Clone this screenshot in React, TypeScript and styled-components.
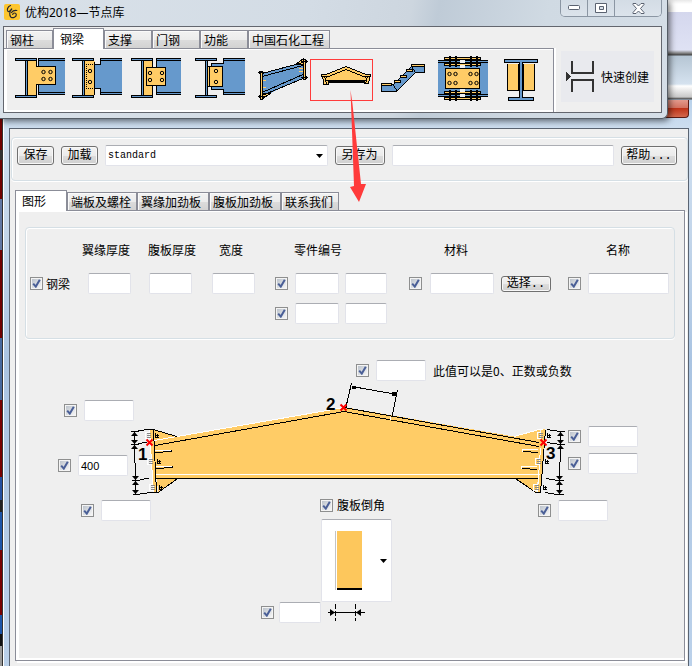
import React from 'react';
import styled, { createGlobalStyle } from 'styled-components';

const CJK = '"Noto Sans CJK SC", sans-serif';
const ORANGE = '#ffcc66';
const BLUE = '#6699cc';

const checkMark =
  "url(\"data:image/svg+xml,%3Csvg xmlns='http://www.w3.org/2000/svg' width='9' height='9'%3E%3Cdefs%3E%3ClinearGradient id='g' x1='0' y1='0' x2='1' y2='1'%3E%3Cstop offset='0' stop-color='%23bcc3cc'/%3E%3Cstop offset='1' stop-color='%23f6f6f6'/%3E%3C/linearGradient%3E%3C/defs%3E%3Crect width='9' height='9' fill='url(%23g)'/%3E%3Cpath d='M1.2 4.6 L3.8 7.6 L7.8 0.8' fill='none' stroke='%234a5f97' stroke-width='2'/%3E%3C/svg%3E\")";

const downArrow =
  "url(\"data:image/svg+xml,%3Csvg xmlns='http://www.w3.org/2000/svg' width='7' height='4'%3E%3Cpath d='M0 0H7L3.5 4Z'/%3E%3C/svg%3E\")";

const GlobalStyle = createGlobalStyle`
  *, *::before, *::after { box-sizing: border-box; }
  body { margin: 0; font-family: "Liberation Sans", ${CJK}; font-size: 12px; line-height: 16px; color: #000; }
  button, input, select { font: inherit; color: inherit; margin: 0; }
`;

const Desktop = styled.div`
  position: relative;
  display: flex;
  flex-direction: column;
  min-height: 100vh;
  padding: 100px 0 0 2px;
  overflow: hidden;
  background:
    linear-gradient(#700000 0 100px, #700000 150px, #333 150px 160px, #700000 160px 199px, #6177a3 199px 250px,
      #700000 250px 338px, #47699e 338px 400px, #780000 400px 477px, #2450a0 477px 500px, #222 500px 512px,
      #1d55a8 512px 550px, #780000 550px 615px, #1d55a8 615px 634px, #111 634px 646px, #999 646px) 0 0 / 3px 100% no-repeat,
    linear-gradient(#e8e8e8 0, #fff 4px 12px, #d4d7ed 12px, #dfe2f4 50px, #888 53px, #444 55px, #b6c6d4 56px,
      #d5e2ef 84px, #fff 86px, #c8c8c8 97px, #444 99px, #b9d1ea 100px);
`;

const ToolWindow = styled.section`
  position: absolute;
  z-index: 2;
  top: 0;
  left: 0;
  right: 24px;
  padding: 0 5px 5px 3px;
  border-right: 1px solid #555d66;
  border-bottom: 1px solid #555d66;
  border-radius: 0 0 6px 0;
  background: linear-gradient(100deg, #d9e1e9 0%, #d3dce5 45%, #cdd6df 60%, #bfcbd7 64%, #d0dae3 80%, #d5dee7 100%);
  box-shadow: 2px 2px 6px rgba(0, 0, 0, 0.55);
`;

const TitleBar = styled.header`
  display: flex;
  align-items: flex-start;
  height: 26px;
`;

const AppTitle = styled.h1`
  flex: 1;
  margin: 0;
  padding: 4px 0 0 5px;
  font: 400 12px/17px "Noto Sans", ${CJK};
`;

const LogoIcon = styled.svg`
  margin: 4px 0 0 1px;
`;

const WindowControls = styled.div`
  display: flex;
  height: 17px;
  border: 1px solid #8b96a3;
  border-top: 0;
  border-radius: 0 0 5px 5px;
  overflow: hidden;
`;

const WindowButton = styled.button<{ $wide?: boolean }>`
  display: flex;
  justify-content: center;
  align-items: center;
  width: ${(p) => (p.$wide ? 46 : 27)}px;
  padding: 0;
  border: 0;
  border-right: 1px solid #8b96a3;
  background: linear-gradient(#d3dce5, #dbe3eb);
  &:last-child { border-right: 0; }
`;

const ToolClient = styled.div`
  display: flex;
  align-items: stretch;
  height: 87px;
  border: 1px solid #63666e;
  background: #efefef;
`;

const ToolTabs = styled.div`
  display: flex;
  flex-direction: column;
  width: 550px;
`;

const TabStrip = styled.div<{ $h: number }>`
  position: relative;
  z-index: 1;
  display: flex;
  align-items: flex-end;
  height: ${(p) => p.$h}px;
  margin-bottom: -1px;
  padding-bottom: 1px;
`;

const ToolTabStrip = styled(TabStrip)`
  padding-left: 2px;
`;

const Tab = styled.button<{ $w: number; $active?: boolean }>`
  flex: none;
  width: ${(p) => p.$w}px;
  height: ${(p) => (p.$active ? 21 : 18)}px;
  margin-bottom: ${(p) => (p.$active ? -1 : 0)}px;
  padding: 0 0 0 ${(p) => (p.$active ? 6 : 3)}px;
  border: 1px solid #8b8d98;
  border-bottom: 0;
  font-family: ${CJK};
  line-height: 16px;
  text-align: left;
  white-space: nowrap;
  background: ${(p) => (p.$active ? '#fff' : 'linear-gradient(#f2f2f2, #ececec 50%, #dcdcdc 51%, #d2d2d2)')};
  box-shadow: ${(p) => (p.$active ? 'none' : 'inset 1px 1px 0 #fafafa')};
`;

const ToolPanel = styled.div`
  display: flex;
  flex: 1;
  align-items: flex-start;
  padding: 7px 0 0 11px;
  border-top: 1px solid #8b8d98;
  border-right: 1px solid #8b8d98;
  box-shadow: inset 3px 1px 0 #fff, inset 0 -2px 0 #fff, 2px 0 0 #fff;
`;

const ToolButton = styled.button<{ $w: number; $marked?: boolean }>`
  flex: none;
  width: ${(p) => p.$w}px;
  height: 46px;
  padding: 0;
  border: 0;
  background: none;
  text-align: left;
  svg { display: block; }
`;

const MarkedFrame = styled.span`
  display: flex;
  width: 63px;
  height: 42px;
  margin-top: 2px;
  border: 1px solid #ff3b3b;
`;

const QuickCreate = styled.button`
  display: flex;
  align-items: center;
  gap: 6px;
  height: 51px;
  margin: 24px 0 0 7px;
  padding: 0 5px;
  border: 0;
  background: #e9eaee;
  font-family: ${CJK};
  white-space: nowrap;
`;

const Dialog = styled.section`
  display: flex;
  flex: 1;
  flex-direction: column;
  padding: 0 3px 0 6px;
  border-left: 1px solid #333;
  background: linear-gradient(#b9d1ea 0, #cfdff0 30px, #c2d5ea 140px, #aac4e2 260px, #bbd1ea 100%);
  box-shadow: inset 1px 0 0 #fff;
`;

const DialogTitle = styled.header`
  display: flex;
  justify-content: flex-end;
  height: 28px;
`;

const DialogClose = styled.button`
  width: 46px;
  height: 18px;
  padding: 0;
  border: 1px solid #5c1c14;
  border-top: 0;
  border-radius: 0 0 4px 4px;
  background: linear-gradient(#e39a8c, #d37361 45%, #bf3419 50%, #d3684d);
`;

const DialogClient = styled.div`
  flex: 1;
  padding: 8px 0 0 1px;
  border: 1px solid #5a6472;
  border-bottom: 0;
  background: #efefef;
`;

const Group = styled.div`
  border: 1px solid #d5dfe5;
  border-radius: 4px;
  box-shadow: inset 1px 1px 0 #fff, 0 1px 0 #fff;
`;

const FileBar = styled(Group)`
  display: flex;
  align-items: flex-start;
  gap: 7px;
  height: 44px;
  padding: 8px 10px 0 5px;
`;

const PushButton = styled.button<{ $w: number; $small?: boolean }>`
  flex: none;
  width: ${(p) => p.$w}px;
  height: ${(p) => (p.$small ? 16 : 19)}px;
  padding: 0;
  border: 1px solid #707070;
  border-radius: 3px;
  font-family: "Liberation Mono", ${CJK};
  line-height: ${(p) => (p.$small ? 14 : 16)}px;
  white-space: nowrap;
  background: linear-gradient(#f3f3f3, #ebebeb 50%, #dddddd 51%, #cfcfcf);
  box-shadow: inset 0 0 0 1px #f8f8f8;
`;

const fieldBorder = `
  border: 1px solid #e2e3ea;
  border-top-color: #abadb3;
  border-radius: 2px;
  background-color: #fff;
`;

const PresetSelect = styled.select`
  flex: 1;
  min-width: 0;
  height: 21px;
  margin-top: -1px;
  padding: 0 2px;
  appearance: none;
  ${fieldBorder}
  background-image: ${downArrow};
  background-repeat: no-repeat;
  background-position: right 4px center;
  font: 10px/18px "Liberation Mono", monospace;
`;

const TextBox = styled.input<{ $w?: number }>`
  flex: ${(p) => (p.$w ? 'none' : '1')};
  width: ${(p) => (p.$w ? `${p.$w}px` : '0')};
  min-width: 0;
  height: 21px;
  padding: 0 2px;
  ${fieldBorder}
  font: 11px/19px "Liberation Sans", sans-serif;
`;

const NameBox = styled(TextBox)`
  margin-top: -1px;
`;

const Check = styled.input.attrs({ type: 'checkbox', defaultChecked: true })`
  flex: none;
  width: 13px;
  height: 13px;
  appearance: none;
  border: 1px solid #8e8f8f;
  background: #f4f4f4;
  &:checked { background: #f4f4f4 ${checkMark} center no-repeat; }
`;

const Label = styled.label`
  font-family: ${CJK};
  white-space: nowrap;
`;

const FormTabs = styled(TabStrip)`
  margin: 9px 0 -1px 4px;
`;

const FormPanel = styled.div`
  min-height: 451px;
  margin: 0 3px 0 4px;
  padding: 16px 9px 0;
  border: 1px solid #8b8d98;
  box-shadow: inset 3px 1px 0 #fff, inset 0 -2px 0 #fff, 2px 2px 0 #fff;
`;

const BeamGroup = styled(Group)`
  height: 112px;
  padding: 14px 5px 0 4px;
`;

const HeadRow = styled.div`
  display: grid;
  grid-template-columns: 66px 71px 75px 150px 162px 1fr;
  padding-left: 52px;
  font-family: ${CJK};
  white-space: nowrap;
`;

const FieldGrid = styled.div`
  display: grid;
  grid-template-columns: 58px 61px 63px 63px 134px 159px minmax(0, 1fr);
  row-gap: 9px;
  margin-top: 15px;
`;

const Field = styled.div<{ $gap?: number }>`
  display: flex;
  align-items: center;
  gap: ${(p) => p.$gap ?? 7}px;
`;

const PartField = styled(Field)`
  grid-column: 5;
`;

const Drawing = styled.div`
  padding: 21px 0 0;
`;

const ApexRow = styled(Field)`
  padding-left: 331px;
`;

const GableRow = styled.div`
  display: flex;
  align-items: flex-start;
  padding: 1px 0 0 33px;
`;

const LeftFields = styled.div`
  display: flex;
  flex-direction: column;
  align-items: flex-end;
  gap: 34px;
  width: 76px;
  padding-top: 18px;
`;

const EdgeField = styled(Field)`
  padding-right: 6px;
`;

const RightFields = styled.div`
  display: flex;
  flex-direction: column;
  gap: 6px;
  padding: 44px 0 0 4px;
`;

const GableSvg = styled.svg`
  display: block;
  flex: none;
  overflow: visible;
`;

const BottomRow = styled.div`
  display: grid;
  grid-template-columns: 180px 277px auto;
  align-items: start;
  padding: 0 0 0 56px;
`;

const OuterField = styled(Field)`
  padding-top: 4px;
`;

const ChamferColumn = styled.div`
  display: flex;
  flex-direction: column;
`;

const ChamferLabel = styled(Field)`
  height: 18px;
  margin: 0 0 5px 59px;
`;

const ChamferPicker = styled.button`
  display: flex;
  align-items: center;
  justify-content: space-between;
  width: 71px;
  height: 83px;
  margin: 0 0 0 60px;
  padding: 0 4px 0 13px;
  ${fieldBorder}
`;

const Pointer = styled.svg`
  position: absolute;
  z-index: 3;
  top: 90px;
  left: 348px;
  pointer-events: none;
`;

type RectProps = { x: number; y: number; w: number; h: number; fill: string };
const Box = ({ x, y, w, h, fill }: RectProps) => (
  <rect x={x + 0.5} y={y + 0.5} width={w - 1} height={h - 1} fill={fill} stroke="#000" />
);

const Bolts = ({ at, r = 1.7 }: { at: [number, number][]; r?: number }) => (
  <g fill="none" stroke="#000" shapeRendering="auto">
    {at.map(([x, y]) => (
      <circle key={`${x}-${y}`} cx={x} cy={y} r={r} />
    ))}
  </g>
);

const Column = ({ x }: { x: number }) => (
  <g>
    <Box x={x} y={58} w={22} h={3} fill={BLUE} />
    <Box x={x} y={95} w={22} h={3} fill={BLUE} />
    <Box x={x + 10} y={60} w={3} h={36} fill={BLUE} />
  </g>
);

const Girder = ({ x, w }: { x: number; w: number }) => (
  <g>
    <rect x={x} y={58} width={w} height={37} fill={BLUE} />
    <path d={`M${x + w} 58.5H${x + 0.5}V94.5H${x + w}M${x} 60.5h${w}M${x} 92.5h${w}`} fill="none" stroke="#000" />
  </g>
);

const ToolIcon = ({ x, w, children }: { x: number; w: number; children: React.ReactNode }) => (
  <svg width={w} height={46} viewBox={`${x} 56 ${w} 46`} shapeRendering="crispEdges" aria-hidden="true">
    {children}
  </svg>
);

const ShearPlateIcon = () => (
  <ToolIcon x={15} w={50}>
    <Column x={15} />
    <Girder x={38} w={27} />
    <rect x={28} y={61} width={9} height={34} fill={ORANGE} />
    <rect x={36} y={66} width={19} height={18} fill={ORANGE} />
    <path d="M36.5 61V66.5H55.5V84.5H36.5V95" fill="none" stroke="#000" />
    <Bolts at={[[43.5, 72], [50.5, 72], [43.5, 79], [50.5, 79]]} />
  </ToolIcon>
);

const EndPlateIcon = () => (
  <ToolIcon x={72} w={50}>
    <Column x={72} />
    <Girder x={100} w={22} />
    <rect x={95} y={65} width={8} height={23} fill={BLUE} />
    <path d="M95 64.5H101M95 88.5H101" stroke="#000" />
    <rect x={85} y={61} width={10} height={34} fill={ORANGE} />
    <path d="M94.5 62V95" stroke="#000" />
    <path d="M93 64.5H86.5V88.5H94" fill="none" stroke="#000" strokeDasharray="1 1" />
    <Bolts at={[[90, 71], [90, 82]]} />
  </ToolIcon>
);

const SplicePlateIcon = () => (
  <ToolIcon x={131} w={50}>
    <Column x={131} />
    <Girder x={156} w={25} />
    <rect x={144} y={61} width={8} height={34} fill={ORANGE} />
    <path d="M152.5 61V95" stroke="#000" />
    <Box x={146} y={67} w={20} h={19} fill={ORANGE} />
    <Bolts at={[[150, 73], [162, 73], [150, 80], [162, 80]]} />
  </ToolIcon>
);

const AngleIcon = () => (
  <ToolIcon x={195} w={50}>
    <Column x={195} />
    <Girder x={223} w={22} />
    <rect x={211} y={64} width={14} height={25} fill={BLUE} />
    <path d="M223 63.5H211.5V89.5H224" fill="none" stroke="#000" />
    <Box x={207} y={66} w={16} h={21} fill={ORANGE} />
    <path d="M209.5 66V86" stroke="#000" />
    <Bolts at={[[216, 71], [216, 82]]} />
  </ToolIcon>
);

const SlopedBeamIcon = () => (
  <ToolIcon x={257} w={53}>
    <path d="M262 73L303 62V78L262 97Z" fill={BLUE} />
    <path d="M296 64L303 59V64ZM262 93H271L262 99Z" fill={ORANGE} stroke="#000" />
    <path d="M262 73.5L303 62.5M262 76.5L303 65.5M262 92.5L303 74.5M262 95.5L303 78.5" stroke="#000" />
    <Box x={260} y={71} w={3} h={29} fill={ORANGE} />
    <Box x={303} y={59} w={3} h={21} fill={ORANGE} />
    <path d="M258 72.5H266M258 96.5H266M301 61.5H308M301 77.5H308M259.5 71V74M259.5 95V98M306.5 60V63M306.5 76V79" stroke="#000" />
    <path d="M263 80.5H266M263 87.5H266M299 68.5H303M299 71.5H303" stroke={ORANGE} />
  </ToolIcon>
);

const GableIcon = () => (
  <svg width={61} height={40} viewBox="311 60 61 40" shapeRendering="crispEdges" aria-hidden="true">
    <path d="M325 75L346 67L368 75V83H325Z" fill={ORANGE} />
    <path d="M321.5 74.5L326 74.5L346 66.5L366 74.5H370.5L368.5 83.5H364V81.5H328V84.5H323.5V80Z" fill={ORANGE} stroke="#000" />
    <path d="M326 77.5L346 69.5L366 77.5M326 80.5H366M324.5 76L326.5 84M367.5 76L365.5 84M321 76.5H327M365 76.5H371M328 82.5H364" fill="none" stroke="#000" />
  </svg>
);

const StairIcon = () => (
  <ToolIcon x={381} w={45}>
    <path d="M381.5 84.5H393.5L411.5 66.5V64.5H424.5V72.5H415.5L396.5 91.5H381.5Z" fill={BLUE} stroke="#000" />
    <path d="M393.5 85.5L397.5 91.5M411.5 66.5L415.5 72.5" stroke="#000" />
    <Box x={381} y={83} w={11} h={3} fill={ORANGE} />
    <Box x={394} y={80} w={7} h={3} fill={ORANGE} />
    <Box x={400} y={75} w={7} h={3} fill={ORANGE} />
    <Box x={406} y={69} w={7} h={3} fill={ORANGE} />
    <Box x={411} y={64} w={14} h={3} fill={ORANGE} />
  </ToolIcon>
);

const SpliceIcon = () => (
  <ToolIcon x={438} w={50}>
    <rect x={438} y={60} width={50} height={37} fill={BLUE} />
    <path d="M438 60.5H488M438 62.5H488M438 94.5H488M438 96.5H488" stroke="#000" />
    <Box x={444} y={57} w={37} h={3} fill={ORANGE} />
    <Box x={444} y={63} w={37} h={3} fill={ORANGE} />
    <Box x={444} y={91} w={37} h={3} fill={ORANGE} />
    <Box x={444} y={97} w={37} h={3} fill={ORANGE} />
    <path d="M460 60h5v3h-5zM460 65h5v3h-5zM460 89h5v3h-5zM460 94h5v3h-5z" fill="#efefef" />
    <path d="M449.5 56V67M455.5 56V67M470.5 56V67M476.5 56V67M449.5 90V101M455.5 90V101M470.5 90V101M476.5 90V101" stroke="#000" strokeWidth={2} />
    <Box x={445} y={68} w={35} h={21} fill={ORANGE} />
    <Bolts at={[[449.5, 74], [455.5, 74], [470.5, 74], [476.5, 74], [449.5, 83], [455.5, 83], [470.5, 83], [476.5, 83]]} />
  </ToolIcon>
);

const StiffenerIcon = () => (
  <ToolIcon x={504} w={34}>
    <Box x={507} y={63} w={12} h={28} fill={ORANGE} />
    <Box x={523} y={63} w={12} h={28} fill={ORANGE} />
    <path d="M507 63.5H535" stroke="#efefef" />
    <Box x={504} y={59} w={34} h={4} fill={BLUE} />
    <Box x={508} y={97} w={26} h={4} fill={BLUE} />
    <rect x={519} y={63} width={4} height={34} fill="#000" />
    <rect x={520} y={61} width={2} height={37} fill={BLUE} />
  </ToolIcon>
);

const tools = [
  { name: '剪切板', w: 57, icon: <ShearPlateIcon /> },
  { name: '端板', w: 59, icon: <EndPlateIcon /> },
  { name: '拼接板', w: 64, icon: <SplicePlateIcon /> },
  { name: '角钢', w: 62, icon: <AngleIcon /> },
  { name: '斜梁', w: 53, icon: <SlopedBeamIcon /> },
  { name: '门式梁', w: 71, icon: <MarkedFrame><GableIcon /></MarkedFrame> },
  { name: '楼梯', w: 57, icon: <StairIcon /> },
  { name: '梁拼接', w: 66, icon: <SpliceIcon /> },
  { name: '加劲板', w: 34, icon: <StiffenerIcon /> },
];

const toolTabs = [
  { text: '钢柱', w: 47 },
  { text: '钢梁', w: 51, active: true },
  { text: '支撑', w: 48 },
  { text: '门钢', w: 48 },
  { text: '功能', w: 48 },
  { text: '中国石化工程', w: 82 },
];

const formTabs = [
  { text: '图形', w: 52, active: true },
  { text: '端板及螺栓', w: 70 },
  { text: '翼缘加劲板', w: 72 },
  { text: '腹板加劲板', w: 72 },
  { text: '联系我们', w: 58 },
];

/** Nut-and-bolt mark beside an end plate. */
const PlateBolt = ({ x, y }: { x: number; y: number }) => (
  <g>
    <path d={`M${x - 6.5} ${y - 3}H${x - 9.5}V${y + 3}H${x - 6}`} fill="none" stroke="#fff" />
    <path d={`M${x - 8} ${y - 1.5}h4M${x - 8} ${y + 0.5}h4M${x - 8} ${y + 2.5}h4`} stroke="#888" />
    <path d={`M${x + 0.5} ${y - 2}V${y + 2.5}H${x + 4}M${x + 2.5} ${y - 1}V${y + 2}M${x + 1} ${y + 0.5}H${x + 4}`} fill="none" stroke="#000" />
  </g>
);

const Stiffener = ({ x, y }: { x: number; y: number }) => (
  <g>
    <path d={`M${x} ${y + 0.5}H${x + 16}`} stroke="#fff" />
    <path d={`M${x} ${y + 2.5}L${x + 16} ${y + 1.5}V${y}`} fill="none" stroke="#000" />
  </g>
);

const Cross = ({ x, y }: { x: number; y: number }) => (
  <path d={`M${x - 3} ${y - 3}l6 6M${x + 3} ${y - 3}l-6 6`} stroke="#f00" strokeWidth={2} shapeRendering="auto" />
);

const DimChain = ({ x, lean }: { x: number; lean: number }) => (
  <g>
    <path
      d={`M${x} 431V444L${x + lean} 480V494M${x - 4} 431.5h8M${x - 4} 444.5h8M${x - 4 + lean} 480.5h8M${x - 3 + lean} 494.5h7`}
      fill="none"
      stroke="#000"
    />
    <path
      d={`M${x} 432l3.5 4h-7zM${x} 444l3.5 -4h-7zM${x} 445l3.5 4h-7zM${x + lean} 480l3.5 -4h-7zM${x + lean} 481l3.5 4h-7zM${x + lean} 494l3.5 -4h-7z`}
      shapeRendering="auto"
    />
  </g>
);

const GableDrawing = () => (
  <GableSvg width={430} height={114} viewBox="134 382 430 114" shapeRendering="crispEdges" role="img" aria-label="门式梁">
    <g fill={ORANGE}>
      <path d="M154 440L344 407L540 441V479H155Z" />
      <path d="M153 430L178 437L154 442ZM157 479H177L158 493Z" />
      <path d="M540 429L514 437L540 442ZM516 479H538L536 493Z" />
      <path d="M150 430H153L157 493H153Z" />
      <path d="M541 429H545L541 493H537Z" />
    </g>
    <path d="M149.5 430L153.5 493M154 440.5L344 407.5M155 474.5H540M514 436.5L539 429.5H543M540.5 448L537.5 492" fill="none" stroke="#fff" />
    <path
      d="M150 429.5H153L177 436.5M153.5 430L156.5 492M155 445.5L344 411.5L539 446.5M344 407.5L539 442.5M156 478.5H538M177 479L158 492.5H154M545.5 430L540.5 492.5H536L516 479"
      fill="none"
      stroke="#000"
    />
    <Stiffener x={155} y={450} />
    <Stiffener x={156} y={466} />
    <path d="M538 449.5H522.5V452M537 466.5H521.5V469" fill="none" stroke="#fff" />
    <path d="M523 451.5L538 452.5M522 468.5L537 469.5" stroke="#000" />
    <PlateBolt x={155} y={435} />
    <PlateBolt x={157} y={461} />
    <PlateBolt x={159} y={487} />
    <PlateBolt x={547} y={435} />
    <PlateBolt x={545} y={461} />
    <PlateBolt x={543} y={487} />
    <DimChain x={134.5} lean={1} />
    <DimChain x={560.5} lean={-1} />
    <path
      d="M138 430.5L150 429.5M138 443.5L147 442.5M140 479.5L149 478.5M140 493.5L154 492.5M547 429.5L560 431.5M547 442.5L560 444.5M546 478.5L558 480.5M545 492.5L557 494.5"
      fill="none"
      stroke="#000"
    />
    <path d="M351.5 383L346 407M397.5 390L392 417M352 386.5L397 394.5" fill="none" stroke="#000" />
    <path d="M352 386h4v3h-4zM392 392h4v4h-4z" />
    <path d="M390.5 420v-3.500" stroke="#fff" />
    <Cross x={149.5} y={442.5} />
    <Cross x={343.5} y={407.5} />
    <Cross x={543.5} y={442.5} />
    <g fontFamily="Liberation Sans, sans-serif" fontWeight="700" fontSize="17">
      <text x="138" y="460">1</text>
      <text x="326" y="410">2</text>
      <text x="546" y="459">3</text>
    </g>
  </GableSvg>
);

const CheckedField = ({ name, w, value, gap }: { name: string; w: number; value?: string; gap?: number }) => (
  <Field $gap={gap}>
    <Check aria-label={`启用${name}`} />
    <TextBox $w={w} aria-label={name} defaultValue={value} />
  </Field>
);

export default function App() {
  return (
    <>
      <GlobalStyle />
      <Desktop>
        <ToolWindow>
          <TitleBar>
            <LogoIcon width="16" height="16" viewBox="0 0 16 16" aria-hidden="true">
              <rect width="16" height="16" rx="2" fill="#fdc62f" />
              <path
                d="M6.500 1.500C3.500 2.500 2.500 6.500 4 7.500C6 8 8.500 4.500 7.500 5C5.500 7 5 11.500 7 13.200C9 14.500 12.500 13 12.300 10.500C12 8.500 9 8.500 8.700 10.500M7.500 8.500C9 6.300 11 6.300 12.800 6.500"
                fill="none"
                stroke="#26262e"
                strokeWidth="1.200"
                strokeLinecap="round"
              />
            </LogoIcon>
            <AppTitle>优构2018—节点库</AppTitle>
            <WindowControls>
              <WindowButton aria-label="最小化">
                <svg width="12" height="6" viewBox="0 0 12 6"><rect x="0.500" y="0.500" width="11" height="4" rx="1" fill="#fff" stroke="#5a6270" /></svg>
              </WindowButton>
              <WindowButton aria-label="最大化">
                <svg width="12" height="10" viewBox="0 0 12 10"><path d="M0.500 0.500h11v9H0.500zM4.500 3.500h4v3h-4z" fill="#fff" fillRule="evenodd" stroke="#5a6270" /></svg>
              </WindowButton>
              <WindowButton $wide aria-label="关闭">
                <svg width="13" height="11" viewBox="0 0 13 11"><path d="M1 0.500h3l2.500 2.500L9 0.500h3v1L8.500 5.500L12 9.500v1H9L6.500 8L4 10.500H1v-1L4.500 5.500L1 1.500z" fill="#fff" stroke="#5a6270" /></svg>
              </WindowButton>
            </WindowControls>
          </TitleBar>
          <ToolClient>
            <ToolTabs>
              <ToolTabStrip $h={22} role="tablist">
                {toolTabs.map((t) => (
                  <Tab key={t.text} role="tab" aria-selected={!!t.active} $w={t.w} $active={t.active}>{t.text}</Tab>
                ))}
              </ToolTabStrip>
              <ToolPanel>
                {tools.map((t) => (
                  <ToolButton key={t.name} aria-label={t.name} $w={t.w}>{t.icon}</ToolButton>
                ))}
              </ToolPanel>
            </ToolTabs>
            <QuickCreate>
              <svg width="29" height="32" viewBox="566 61 29 32" shapeRendering="crispEdges" aria-hidden="true">
                <path d="M572 61V73H593V61M572 92V80H593V92" fill="none" stroke="#333" strokeWidth="2" />
                <path d="M566 72V81L571 76.500Z" fill="#333" />
              </svg>
              快速创建
            </QuickCreate>
          </ToolClient>
        </ToolWindow>

        <Dialog>
          <DialogTitle>
            <DialogClose aria-label="关闭对话框" />
          </DialogTitle>
          <DialogClient>
            <FileBar>
              <PushButton $w={37}>保存</PushButton>
              <PushButton $w={37}>加载</PushButton>
              <PresetSelect aria-label="配置">
                <option>standard</option>
              </PresetSelect>
              <PushButton $w={50}>另存为</PushButton>
              <NameBox aria-label="另存为名称" />
              <PushButton $w={56}>帮助...</PushButton>
            </FileBar>

            <FormTabs $h={21} role="tablist">
              {formTabs.map((t) => (
                <Tab key={t.text} role="tab" aria-selected={!!t.active} $w={t.w} $active={t.active}>{t.text}</Tab>
              ))}
            </FormTabs>
            <FormPanel>
              <BeamGroup>
                <HeadRow>
                  <span>翼缘厚度</span>
                  <span>腹板厚度</span>
                  <span>宽度</span>
                  <span>零件编号</span>
                  <span>材料</span>
                  <span>名称</span>
                </HeadRow>
                <FieldGrid>
                  <Field $gap={3}>
                    <Check id="beam" />
                    <Label htmlFor="beam">钢梁</Label>
                  </Field>
                  <TextBox $w={43} aria-label="翼缘厚度" />
                  <TextBox $w={43} aria-label="腹板厚度" />
                  <TextBox $w={43} aria-label="宽度" />
                  <Field>
                    <Check aria-label="启用零件编号" />
                    <Field $gap={6}>
                      <TextBox $w={44} aria-label="零件编号前缀" />
                      <TextBox $w={42} aria-label="零件起始编号" />
                    </Field>
                  </Field>
                  <Field>
                    <CheckedField name="材料" w={64} gap={8} />
                    <PushButton $w={50} $small>选择..</PushButton>
                  </Field>
                  <Field>
                    <Check aria-label="启用名称" />
                    <TextBox aria-label="名称" />
                  </Field>
                  <PartField>
                    <Check aria-label="启用构件编号" />
                    <Field $gap={6}>
                      <TextBox $w={44} aria-label="构件编号前缀" />
                      <TextBox $w={42} aria-label="构件起始编号" />
                    </Field>
                  </PartField>
                </FieldGrid>
              </BeamGroup>

              <Drawing>
                <ApexRow>
                  <Check aria-label="启用偏移值" />
                  <TextBox $w={50} id="offset" />
                  <Label htmlFor="offset">此值可以是0、正数或负数</Label>
                </ApexRow>
                <GableRow>
                  <LeftFields>
                    <CheckedField name="左上加腋" w={50} />
                    <EdgeField>
                      <CheckedField name="端部高度" w={50} value="400" />
                    </EdgeField>
                  </LeftFields>
                  <GableDrawing />
                  <RightFields>
                    <CheckedField name="右上加腋" w={50} />
                    <CheckedField name="右端高度" w={50} />
                  </RightFields>
                </GableRow>
                <BottomRow>
                  <OuterField>
                    <CheckedField name="左下加腋" w={50} />
                  </OuterField>
                  <ChamferColumn>
                    <ChamferLabel $gap={4}>
                      <Check id="chamfer" />
                      <Label htmlFor="chamfer">腹板倒角</Label>
                    </ChamferLabel>
                    <ChamferPicker aria-haspopup="listbox" aria-label="倒角类型">
                      <svg width="29" height="60" viewBox="0 0 29 60" shapeRendering="crispEdges" aria-hidden="true">
                        <path d="M0.500 0V59" stroke="#c4c4c4" />
                        <rect x="2" y="0" width="25" height="57" fill="#fdc75c" />
                        <rect x="2" y="57" width="25" height="2" fill="#000" />
                      </svg>
                      <svg width="7" height="4" viewBox="0 0 7 4" aria-hidden="true"><path d="M0 0H7L3.500 4Z" /></svg>
                    </ChamferPicker>
                    <Field>
                      <CheckedField name="倒角尺寸" w={42} gap={5} />
                      <svg width="37" height="17" viewBox="0 0 37 17" aria-hidden="true">
                        <path d="M0 8.500H37" stroke="#000" />
                        <path d="M7.500 0V17M27.500 0V17" stroke="#000" strokeDasharray="5 2" />
                        <path d="M2 5L7 8.500L2 12ZM33 5L28 8.500L33 12Z" />
                      </svg>
                    </Field>
                  </ChamferColumn>
                  <OuterField>
                    <CheckedField name="右下加腋" w={50} />
                  </OuterField>
                </BottomRow>
              </Drawing>
            </FormPanel>
          </DialogClient>
        </Dialog>

        <Pointer width="20" height="114" viewBox="348 90 20 114" aria-hidden="true">
          <path d="M350.500 90L352.500 104L361 184L366 184L359 202L350 187L354 186Z" fill="#ff3b3b" />
        </Pointer>
      </Desktop>
    </>
  );
}
